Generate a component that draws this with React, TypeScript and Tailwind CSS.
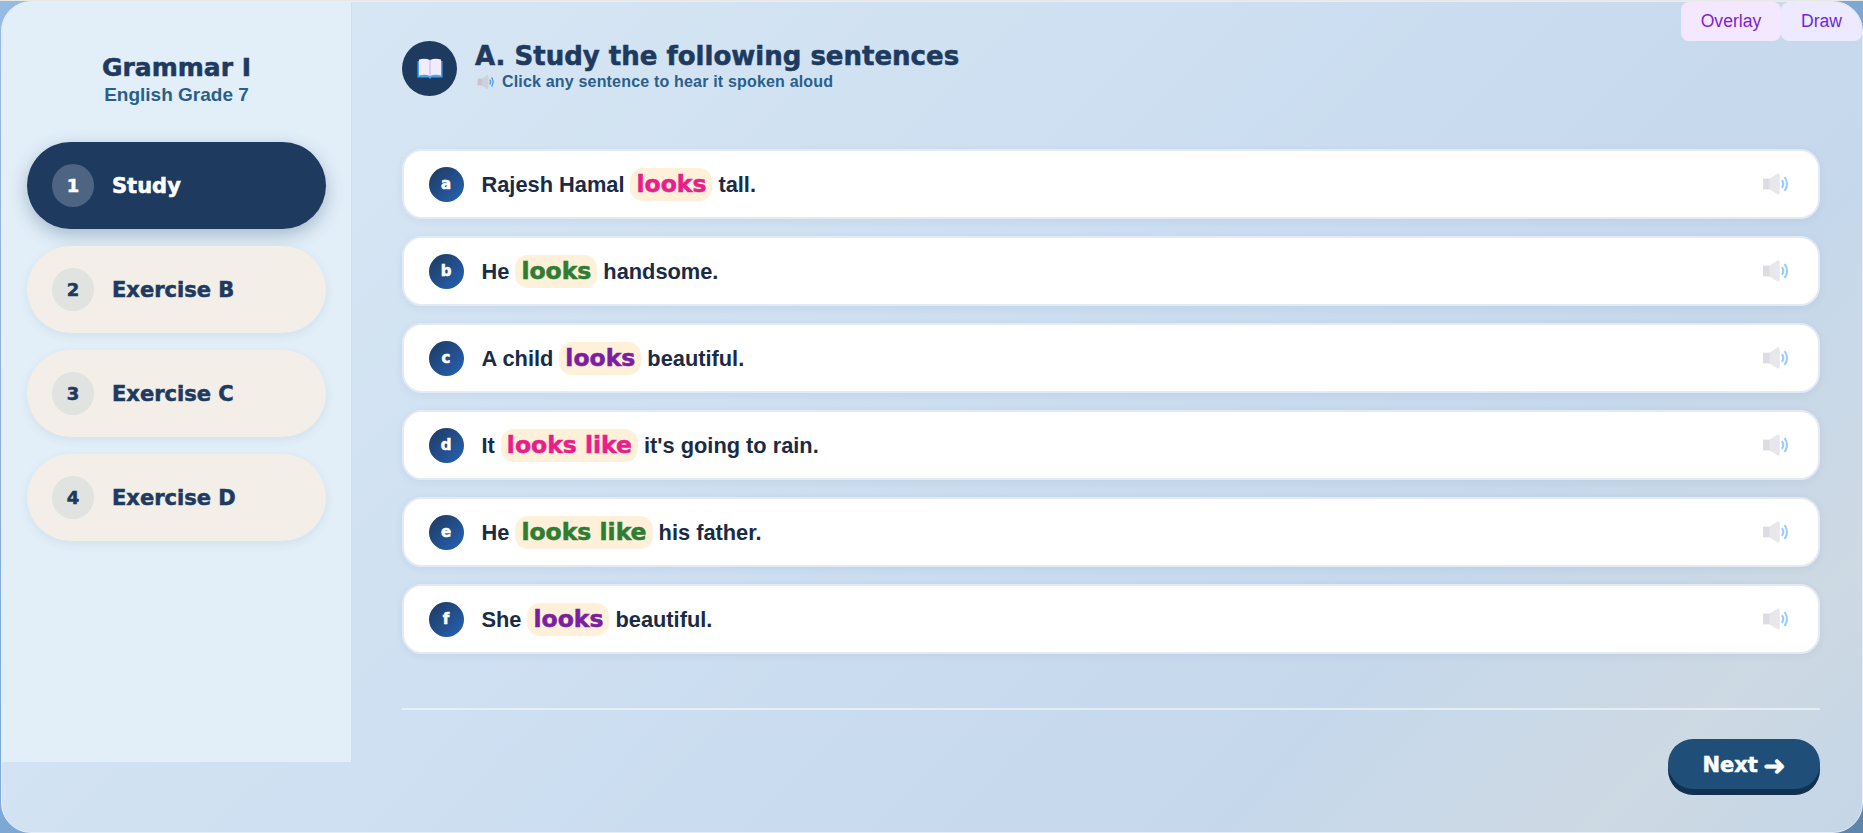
import React from "react";

// stand-in for the heavy display face in the picture
const HEAVY = "font-['DejaVu_Sans',sans-serif] font-bold [-webkit-text-stroke:0.55px_currentColor]";

const NAV = [
  { n: 1, label: "Study", active: true },
  { n: 2, label: "Exercise B", active: false },
  { n: 3, label: "Exercise C", active: false },
  { n: 4, label: "Exercise D", active: false },
];

const SENTENCES = [
  { key: "a", before: "Rajesh Hamal", hl: "looks", color: "text-[#e91e8c]", after: "tall." },
  { key: "b", before: "He", hl: "looks", color: "text-[#2e7d32]", after: "handsome." },
  { key: "c", before: "A child", hl: "looks", color: "text-[#7b1fa2]", after: "beautiful." },
  { key: "d", before: "It", hl: "looks like", color: "text-[#e91e8c]", after: "it's going to rain." },
  { key: "e", before: "He", hl: "looks like", color: "text-[#2e7d32]", after: "his father." },
  { key: "f", before: "She", hl: "looks", color: "text-[#7b1fa2]", after: "beautiful." },
];

function Speaker({ className, wave = "#9ccdf8", body = "#e7e7ec", back = "#dcdde3" }: { className?: string; wave?: string; body?: string; back?: string }) {
  return (
    <svg viewBox="0 0 26 22" className={className}>
      <rect x="1" y="6" width="7" height="10" fill={back} />
      <path d="M7 6 L15 1 Q16.5 1 16.5 3 V19 Q16.5 21 15 21 L7 16 Z" fill={body} />
      <path d="M18.5 7.5 Q21 11 18.5 14.5" fill="none" stroke={wave} strokeWidth="2" />
      <path d="M21 4.5 Q25.5 11 21 17.5" fill="none" stroke={wave} strokeWidth="2" />
    </svg>
  );
}

function Book() {
  return (
    <svg viewBox="0 0 26 22" className="w-[26px] h-[22px]">
      <path d="M0.5 3 H25.5 V19.5 H14.5 L13 21 L11.5 19.5 H0.5 Z" fill="#42a5f5" />
      <path d="M2 1.5 Q8 0 13 2 V18 Q8 16 2 17.5 Z" fill="#f1ebfa" />
      <path d="M24 1.5 Q18 0 13 2 V18 Q18 16 24 17.5 Z" fill="#f1ebfa" />
      <path d="M13 2 V18" stroke="#cdbfe6" strokeWidth="1.2" />
    </svg>
  );
}

export default function App() {
  return (
    <div className="h-[833px] w-[1863px] overflow-hidden border-t border-[#e8e8e8] bg-gradient-to-br from-[#97bbe0] via-[#7ea8d4] to-[#5c84ac] font-['Liberation_Sans',Arial,sans-serif]">
      <div className="relative flex h-[832px] w-[1862px] ml-px items-start overflow-hidden rounded-[30px] border border-[#e4eef8] bg-[linear-gradient(135deg,#dbe9f5_0%,#cddff1_45%,#c5d8ec_75%,#cdd9e3_90%,#c5d6e7_100%)]">
        <aside className="flex h-[760px] w-[350px] shrink-0 flex-col border-r border-[#cfe0f0] bg-[#e2eff9] pl-[25px] pr-[25px] pt-[50px]">
          <h1 className={`text-center text-[25px] leading-[32px] text-[#1e3a5f] ${HEAVY}`}>Grammar I</h1>
          <p className="text-center text-[19px] leading-[22px] font-bold text-[#2a5f8a]">English Grade 7</p>
          <nav className="mt-[36px] flex flex-col gap-[17px]">
            {NAV.map((item) => (
              <div
                key={item.n}
                className={`flex h-[87px] items-center gap-[18px] rounded-[44px] pl-[25px] ${
                  item.active
                    ? "bg-[#1e3a5f] text-white shadow-[0_6px_18px_rgba(30,58,95,0.3)]"
                    : "bg-[#f3eee7] text-[#1e3a5f] shadow-[0_3px_10px_rgba(30,58,95,0.08)]"
                }`}
              >
                <span
                  className={`flex h-[43px] w-[42px] items-center justify-center rounded-full text-[18px] ${HEAVY} ${
                    item.active ? "bg-[#4d6482]" : "bg-[#e0e3df]"
                  }`}
                >
                  {item.n}
                </span>
                <span className={`pt-[2px] text-[21px] ${HEAVY}`}>{item.label}</span>
              </div>
            ))}
          </nav>
        </aside>

        <main className="flex-1 pl-[50px] pr-[42px] pt-[39px]">
          <header className="flex items-start gap-[18px]">
            <div className="flex h-[55px] w-[55px] items-center justify-center rounded-full bg-[#1e3a5f]">
              <Book />
            </div>
            <div className="-mt-[1px]">
              <h2 className={`text-[26px] leading-[32px] text-[#1e3a5f] ${HEAVY}`}>A. Study the following sentences</h2>
              <p className="mt-[1px] flex items-center gap-[7px] pl-[2px] text-[16px] leading-[18px] font-bold tracking-[0.18px] text-[#2a5f8a]">
                <Speaker className="h-[16px] w-[18px]" wave="#4f9fe6" body="#cfd0d8" back="#c3c5cf" />
                Click any sentence to hear it spoken aloud
              </p>
            </div>
          </header>

          <div className="mt-[53px] flex flex-col gap-[17px]">
            {SENTENCES.map((s) => (
              <div
                key={s.key}
                className="flex h-[70px] items-center rounded-[20px] border-[2.5px] border-[#e3eaf6] bg-white pl-[24.5px] pr-[28.5px] shadow-[0_2px_8px_rgba(30,58,95,0.06)]"
              >
                <span className={`mr-[18px] flex h-[35px] w-[35px] items-center justify-center rounded-full bg-gradient-to-br from-[#1e3a5f] to-[#2563b8] text-[15px] text-white ${HEAVY}`}>
                  {s.key}
                </span>
                <span className="flex flex-1 items-baseline gap-[6px] pt-[2px] text-[21.8px] font-bold text-[#1a2b45]">
                  {s.before}
                  <span className={`rounded-[13px] bg-[#fff0d9] px-[6px] leading-[33px] text-[23.5px] ${s.color} ${HEAVY}`}>{s.hl}</span>
                  {s.after}
                </span>
                <Speaker className="h-[24px] w-[28px]" />
              </div>
            ))}
          </div>

          <div className="mt-[54px] h-[2px] bg-white/50" />

          <div className="mt-[29px] flex justify-end">
            <button className={`flex h-[50px] w-[152px] items-center justify-center gap-[5px] rounded-[25px] bg-[#1f4e79] pt-[3px] text-[21px] text-white shadow-[0_6px_0_#12304f] ${HEAVY}`}>
              Next <span className="text-[27px] leading-[27px]">➜</span>
            </button>
          </div>
        </main>

        <div className="absolute right-0 top-0 flex">
          <button className="h-[39px] w-[100px] rounded-[8px] bg-[#f3e8ff] text-[17.6px] text-[#7e22ce]">Overlay</button>
          <button className="h-[39px] w-[81px] rounded-[8px] bg-[#ede9fe] text-[17.6px] text-[#6d28d9]">Draw</button>
        </div>
      </div>
    </div>
  );
}
